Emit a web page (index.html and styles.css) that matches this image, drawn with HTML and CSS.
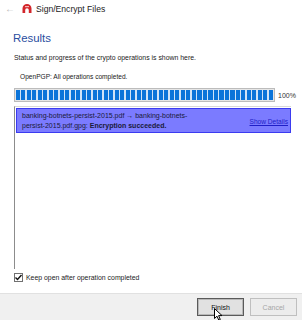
FILE: index.html
```html
<!DOCTYPE html>
<html>
<head>
<meta charset="utf-8">
<link rel="stylesheet" href="styles.css">
</head>
<body>
<div class="win">
  <div class="titlebar">
    <span class="back">&#8592;</span>
    <svg class="appicon" width="10" height="9" viewBox="0 0 10 9">
      <path d="M0.5 9 V4.5 A4.5 4.5 0 0 1 9.5 4.5 V9 H6.8 V6 A1.8 1.8 0 0 0 3.2 6 V9 Z" fill="#d2262b"/>
      <rect x="3" y="2" width="4" height="1.2" fill="#f3b3b3"/>
    </svg>
    <span class="title">Sign/Encrypt Files</span>
  </div>
  <div class="main">
    <h1 class="heading">Results</h1>
    <p class="desc">Status and progress of the crypto operations is shown here.</p>
    <p class="status">OpenPGP: All operations completed.</p>
    <div class="progress-row">
      <div class="progress"><div class="chunks"></div></div>
      <span class="pct">100%</span>
    </div>
    <div class="listbox">
      <div class="item">
        <div class="item-text">banking-botnets-persist-2015.pdf &#8594; banking-botnets-<br>persist-2015.pdf.gpg: <b>Encryption succeeded.</b></div>
        <a class="details">Show Details</a>
      </div>
    </div>
    <label class="keep">
      <span class="cb"><svg width="9" height="9" viewBox="0 0 9 9"><path d="M1.5 4.5 L3.5 6.5 L7.5 2" stroke="#111" stroke-width="1.4" fill="none"/></svg></span>
      Keep open after operation completed
    </label>
  </div>
  <div class="footer">
    <button class="btn btn-default">Finish</button>
    <button class="btn btn-disabled">Cancel</button>
    <svg class="cursor" width="9" height="13" viewBox="0 0 9 13">
      <path d="M0.5 0.5 V10.5 L3 8.2 L4.8 12.2 L6.3 11.5 L4.6 7.6 H8 Z" fill="#fff" stroke="#000" stroke-width="1"/>
    </svg>
  </div>
</div>
</body>
</html>
```
FILE: styles.css
```css
* { box-sizing: border-box; }
html, body { margin: 0; padding: 0; background: #fff; }
body {
  width: 302px;
  height: 320px;
  overflow: hidden;
  font-family: "Liberation Sans", Arial, sans-serif;
  font-size: 7px;
  color: #1a1a1a;
}
.win { display: flex; flex-direction: column; height: 320px; }
.titlebar {
  display: flex;
  align-items: center;
  height: 17px;
  padding-left: 5px;
  padding-top: 0;
}
.back { color: #b8b8b8; font-size: 10px; width: 16px; }
.appicon { margin-left: 1px; margin-right: 4px; }
.title { font-size: 8.6px; color: #222; }
.main { flex: 1; padding: 0 0 0 14px; display: flex; flex-direction: column; }
.heading {
  margin: 14px 0 0 -1px;
  font-size: 11.4px;
  font-weight: normal;
  color: #2a4ea0;
  line-height: 15px;
}
.desc { margin: 6px 0 0 0; line-height: 11px; font-size: 6.9px; }
.status { margin: 8px 0 0 6px; line-height: 11px; font-size: 6.6px; }
.progress-row { display: flex; align-items: center; margin-top: 6px; }
.progress {
  flex: 0 0 261px;
  height: 14px;
  border: 1px solid #bcbcbc;
  background: #e6e6e6;
  padding: 1px;
}
.chunks {
  height: 100%;
  background: repeating-linear-gradient(90deg, #0b74d9 0 4px, #cfe3f7 4px 5.5px);
}
.pct { margin-left: 3px; font-size: 7px; color: #333; }
.listbox {
  margin-top: 4px;
  height: 163px;
  width: 277px;
  border-left: 1px solid #8c8c8c;
  border-top: 1px solid #d8d8d8;
  padding: 1px 0 0 1px;
}
.item {
  position: relative;
  height: 25px;
  background: #7b7bff;
  border: 1px solid #3b3bf0;
  display: flex;
  align-items: center;
  padding-left: 5px;
}
.item-text { line-height: 10px; color: #1a1a3a; font-size: 7px; }
.item-text b { font-weight: bold; }
.details {
  margin-left: auto;
  margin-right: 2px;
  color: #1f1fc8;
  text-decoration: underline;
  font-size: 6.6px;
  margin-top: 1px;
}
.keep {
  display: flex;
  align-items: center;
  margin-top: 4px;
  font-size: 6.9px;
  color: #222;
}
.cb {
  width: 9px; height: 9px;
  border: 1px solid #707070;
  margin-right: 3px;
  display: flex;
}
.cb svg { margin: -1px; }
.footer {
  position: relative;
  height: 27px;
  background: #f0f0f0;
  border-top: 1px solid #e1e1e1;
  display: flex;
  justify-content: flex-end;
  align-items: center;
  gap: 6px;
  padding-right: 5px;
}
.btn {
  width: 47px;
  height: 18px;
  font-family: "Liberation Sans", Arial, sans-serif;
  font-size: 7px;
  padding: 0;
}
.btn-default {
  background: #e1e1e1;
  border: 1px solid #5a5a5a;
  box-shadow: inset 0 0 0 1px #b8b8b8;
  color: #111;
}
.btn-disabled {
  background: #ececec;
  border: 1px solid #bfbfbf;
  color: #a6a6a6;
}
.cursor { position: absolute; left: 214px; top: 14px; }
```
